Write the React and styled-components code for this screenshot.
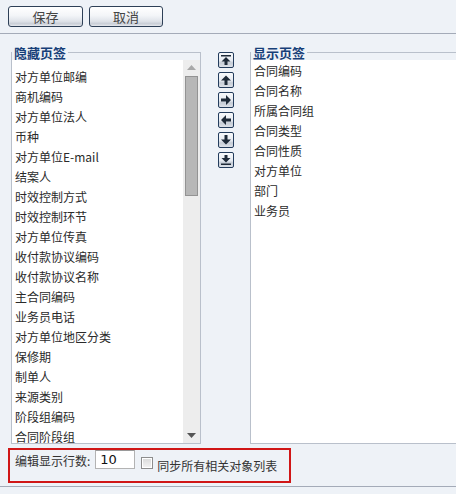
import React from "react";
import styled, { createGlobalStyle } from "styled-components";

const GlobalStyle = createGlobalStyle`
  html, body {
    margin: 0;
    padding: 0;
    overflow: hidden;
    background: #eef2f7;
  }
  body {
    font-family: "Noto Sans CJK SC", "Liberation Sans", sans-serif;
    font-size: 12px;
    color: #222;
  }
`;

const Page = styled.div`
  width: 456px;
  height: 494px;
  background: #eef2f7;
`;

const Toolbar = styled.div`
  display: flex;
  gap: 6px;
  height: 34px;
  padding: 6px 0 0 8px;
  box-sizing: border-box;
  border-bottom: 1px solid #a4abb8;
`;

const Button = styled.button`
  width: ${p => p.$w}px;
  height: 21px;
  padding: 0;
  border: 1px solid #2e4057;
  border-radius: 3px;
  background: linear-gradient(#ffffff 0%, #f3f5f8 45%, #dfe3e9 75%, #c9ced6 88%, #e6e9ee 100%);
  font-family: "Noto Sans CJK SC", sans-serif;
  font-size: 13px;
  line-height: 19px;
  color: #444;
`;

const Main = styled.div`
  display: flex;
  align-items: flex-start;
  padding: 11px 0 0 11px;
  width: 520px;
`;

const Fieldset = styled.fieldset`
  margin: 0;
  padding: 0;
  width: ${p => p.$w}px;
  flex-shrink: 0;
  border: 1px solid #b9c0cb;
  box-sizing: border-box;
  min-width: 0;
`;

const Legend = styled.legend`
  padding: 0 2px 0 2px;
  margin-left: 0;
  font-size: 13px;
  font-weight: bold;
  line-height: 15px;
  color: #173f78;
`;

const ListFrame = styled.div`
  display: flex;
  height: 383px;
`;

const List = styled.div`
  flex: 1;
  background: #fff;
  overflow: hidden;
  padding: ${p => p.$top}px 0 0 3px;
  box-sizing: border-box;
`;

const Item = styled.div`
  height: 20px;
  line-height: 20px;
  white-space: nowrap;
  color: #2a2a2a;
`;

const Scrollbar = styled.div`
  width: 17px;
  display: flex;
  flex-direction: column;
  align-items: center;
  background: #ededed;
`;

const ScrollArrow = styled.div`
  height: 15px;
  display: flex;
  align-items: center;
  justify-content: center;
  width: 100%;
`;

const Thumb = styled.div`
  width: 11px;
  height: 118px;
  margin-top: 1px;
  background: #b7b7b7;
  border: 1px solid #939393;
`;

const Track = styled.div`
  flex: 1;
`;

const MoveColumn = styled.div`
  display: flex;
  flex-direction: column;
  gap: 4px;
  margin: 7px 16px 0 17px;
`;

const MoveButton = styled.div`
  width: 16px;
  height: 16px;
  box-sizing: border-box;
  border: 1px solid #233c5c;
  border-radius: 2px;
  background: linear-gradient(#f8fafc 0%, #e6ebf1 55%, #c5ccd6 70%, #dde2e9 100%);
  display: flex;
  align-items: center;
  justify-content: center;
`;

const OptionBox = styled.div`
  display: flex;
  align-items: flex-start;
  margin: 4px 0 0 8px;
  width: 283px;
  height: 35px;
  box-sizing: border-box;
  border: 2px solid #d01616;
  padding-left: 5px;
`;

const Label = styled.span`
  line-height: 16px;
  margin-top: ${p => p.$top}px;
  margin-left: ${p => p.$left || 0}px;
  white-space: nowrap;
  font-size: 12px;
  color: #333;
`;

const NumberInput = styled.input`
  width: 40px;
  height: 19px;
  box-sizing: border-box;
  margin: 0 0 0 5px;
  padding: 0 0 0 4px;
  border: 1px solid #b3b3b3;
  border-top-color: #9a9a9a;
  background: #fff;
  font-family: "DejaVu Sans", sans-serif;
  font-size: 13px;
  color: #111;
  outline: none;
`;

const Check = styled.span`
  width: 12px;
  height: 12px;
  margin: 7px 0 0 6px;
  box-sizing: border-box;
  border: 1px solid #8d8d8d;
  background: linear-gradient(#d9d9d9, #f4f4f4);
  box-shadow: inset 0 0 0 1px #fff;
`;

const BottomRule = styled.div`
  margin-top: 3px;
  border-top: 1px solid #a4abb8;
`;

const hidden = [
  "对方单位邮编", "商机编码", "对方单位法人", "币种", "对方单位E-mail", "结案人",
  "时效控制方式", "时效控制环节", "对方单位传真", "收付款协议编码", "收付款协议名称",
  "主合同编码", "业务员电话", "对方单位地区分类", "保修期", "制单人", "来源类别",
  "阶段组编码", "合同阶段组",
];

const shown = ["合同编码", "合同名称", "所属合同组", "合同类型", "合同性质", "对方单位", "部门", "业务员"];

const arrowPaths = {
  top: "M1 1 H11 V2.5 H1 Z M6 3 L10.5 7.5 H7.5 V11 H4.5 V7.5 H1.5 Z",
  up: "M6 1.5 L11 6.5 H7.5 V11 H4.5 V6.5 H1 Z",
  right: "M11 6 L6 1 V4.5 H1 V7.5 H6 V11 Z",
  left: "M1 6 L6 1 V4.5 H11 V7.5 H6 V11 Z",
  down: "M6 10.5 L11 5.5 H7.5 V1 H4.5 V5.5 H1 Z",
  bottom: "M4.5 1 H7.5 V4 H10.5 L6 8.5 L1.5 4 H4.5 Z M1 9.5 H11 V11 H1 Z",
};

const Arrow = ({ dir }) => (
  <svg width="12" height="12" viewBox="0 0 12 12">
    <path d={arrowPaths[dir]} fill="#1e2a38" />
  </svg>
);

const Tri = ({ down }) => (
  <svg width="9" height="5" viewBox="0 0 9 5">
    <path d={down ? "M0 0 H9 L4.5 5 Z" : "M0 5 H9 L4.5 0 Z"} fill={down ? "#555" : "#a8a8a8"} />
  </svg>
);

export default function App() {
  return (
    <Page>
      <GlobalStyle />
      <Toolbar>
        <Button $w={75}>保存</Button>
        <Button $w={74}>取消</Button>
      </Toolbar>
      <Main>
        <Fieldset $w={190}>
          <Legend>隐藏页签</Legend>
          <ListFrame>
            <List $top={7}>
              {hidden.map(t => <Item key={t}>{t}</Item>)}
            </List>
            <Scrollbar>
              <ScrollArrow><Tri /></ScrollArrow>
              <Thumb />
              <Track />
              <ScrollArrow><Tri down /></ScrollArrow>
            </Scrollbar>
          </ListFrame>
        </Fieldset>
        <MoveColumn>
          {["top", "up", "right", "left", "down", "bottom"].map(d => (
            <MoveButton key={d}><Arrow dir={d} /></MoveButton>
          ))}
        </MoveColumn>
        <Fieldset $w={240}>
          <Legend>显示页签</Legend>
          <ListFrame>
            <List $top={1}>
              {shown.map(t => <Item key={t}>{t}</Item>)}
            </List>
          </ListFrame>
        </Fieldset>
      </Main>
      <OptionBox>
        <Label $top={3}>编辑显示行数:</Label>
        <NumberInput defaultValue="10" />
        <Check />
        <Label $top={8} $left={4}>同步所有相关对象列表</Label>
      </OptionBox>
      <BottomRule />
    </Page>
  );
}
